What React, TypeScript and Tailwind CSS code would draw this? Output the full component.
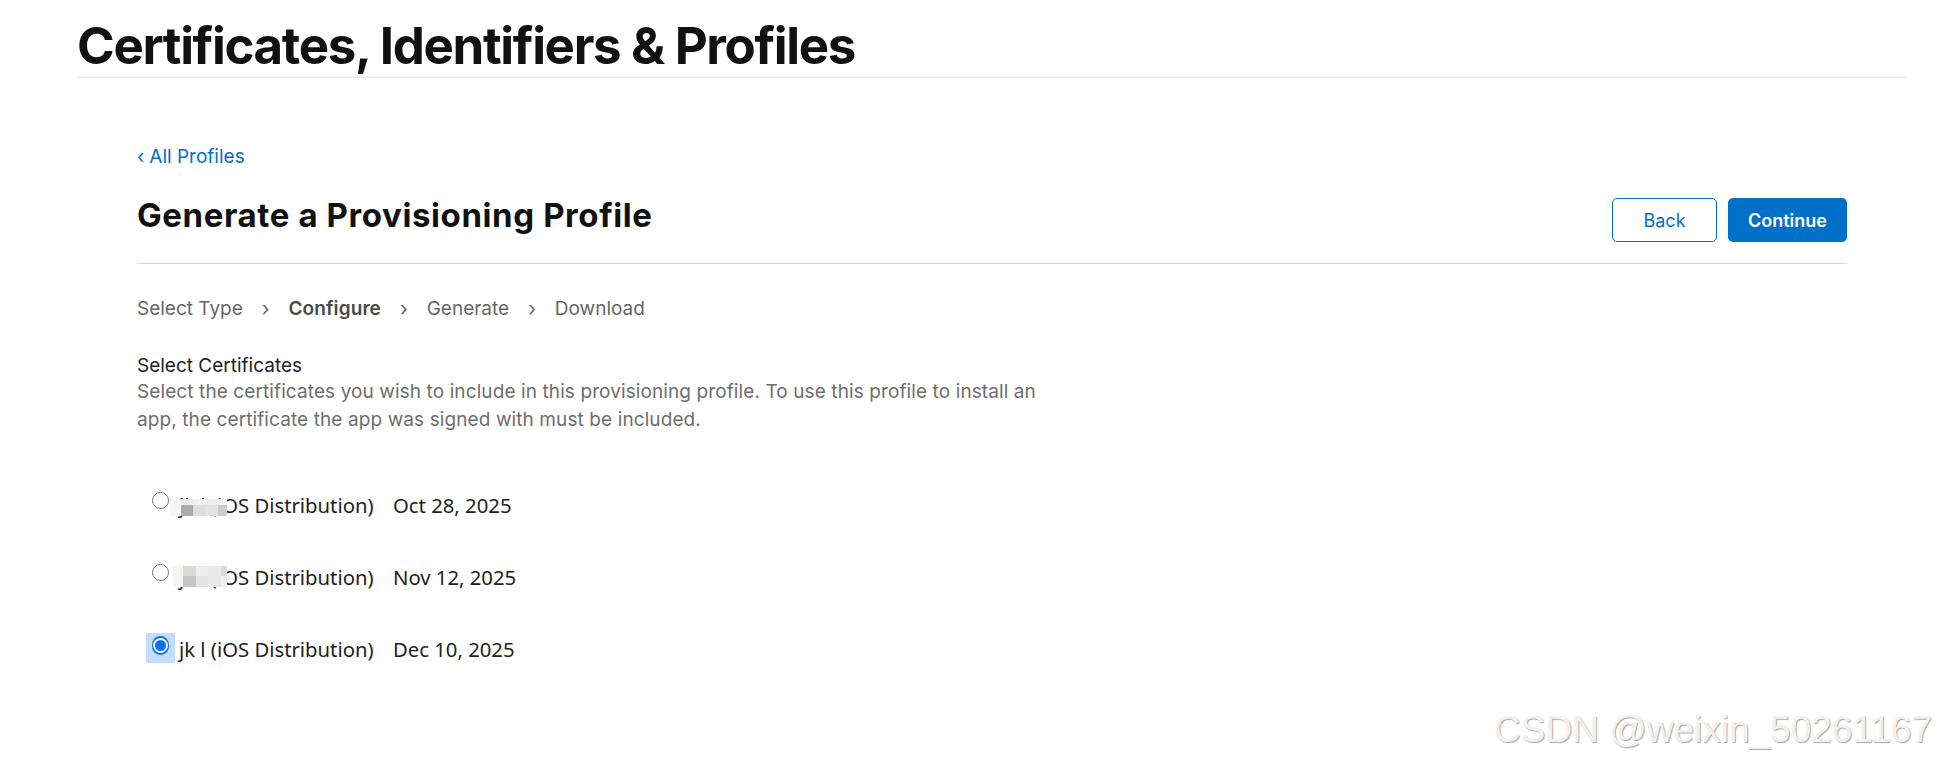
import React from "react";

// Rows of the certificate list; the first two names are pixelated in the picture
const certificates = [
  { name: "jk l", date: "Oct 28, 2025", selected: false, mosaic: 1 },
  { name: "jk l", date: "Nov 12, 2025", selected: false, mosaic: 2 },
  { name: "jk l", date: "Dec 10, 2025", selected: true, mosaic: 0 },
];

function Mosaic({ variant }: { variant: number }) {
  if (variant === 1) {
    return (
      <span className="absolute left-[-9px] top-[7px] flex flex-col">
        <span className="flex h-[6px]">
          <span className="w-[11px] bg-[#f4f4f4]" />
          <span className="w-[12px] bg-[#ececec]" />
          <span className="w-[13px] bg-[#f2f2f2]" />
          <span className="w-[12px] bg-[#eeeeee]" />
          <span className="w-[9px] bg-[#f3f3f3]" />
        </span>
        <span className="flex h-[11px]">
          <span className="w-[11px] bg-[#f6f6f6]" />
          <span className="w-[12px] bg-[#acacac]" />
          <span className="w-[13px] bg-[#dedede]" />
          <span className="w-[12px] bg-[#e3e3e3]" />
          <span className="w-[9px] bg-[#cccccc]" />
        </span>
      </span>
    );
  }
  if (variant === 2) {
    return (
      <span className="absolute left-[-6px] top-[2px] flex flex-col">
        <span className="flex h-[10px]">
          <span className="w-[10px] bg-[#f3f3f3]" />
          <span className="w-[13px] bg-[#d9d9d6]" />
          <span className="w-[12px] bg-[#eeeeee]" />
          <span className="w-[13px] bg-[#e9e9e9]" />
          <span className="w-[6px] bg-[#dadada]" />
        </span>
        <span className="flex h-[11px]">
          <span className="w-[10px] bg-[#f5f5f5]" />
          <span className="w-[13px] bg-[#c6c6c2]" />
          <span className="w-[12px] bg-[#e4e4e4]" />
          <span className="w-[13px] bg-[#e8e8e8]" />
          <span className="w-[6px] bg-[#f0f0f0]" />
        </span>
      </span>
    );
  }
  return null;
}

function Radio({ checked }: { checked: boolean }) {
  if (checked) {
    return (
      <span className="relative mt-[1px] flex h-[17px] w-[17px] shrink-0 items-center justify-center">
        <span className="absolute left-[-6px] top-[-4px] h-[30px] w-[29px] bg-[#c4ddff]" />
        <span className="relative flex h-[19px] w-[19px] items-center justify-center rounded-full bg-[#0a72f0]">
          <span className="flex h-[15px] w-[15px] items-center justify-center rounded-full bg-white">
            <span className="h-[11px] w-[11px] rounded-full bg-[#0a72f0]" />
          </span>
        </span>
      </span>
    );
  }
  return <span className="h-[17px] w-[17px] shrink-0 rounded-full border border-[#767676] bg-white" />;
}

export default function App() {
  return (
    <div className="relative min-h-[760px] overflow-hidden bg-white font-['Inter',sans-serif] text-[#1d1d1f]">
      {/* Cabeçalho da página */}
      <header className="ml-[77px] w-[1830px] border-b border-[#e3e3e3] pb-[5px] pt-[20px]">
        <h1 className="text-[51px] font-bold leading-[52px] tracking-[-1.35px] text-[#111111]">
          Certificates, Identifiers &amp; Profiles
        </h1>
      </header>

      <main className="ml-[137px] w-[1710px]">
        <a href="#" className="mt-[67px] block text-[19px] leading-[24px] text-[#0070c9]">
          <span className="mr-[5px]">‹</span>All Profiles
        </a>

        <div className="flex items-start justify-between border-b border-[#d6d6d6] pb-[21px]">
          <h2 className="mt-[27px] text-[33px] font-bold leading-[38px] tracking-[0.6px] text-[#111111]">
            Generate a Provisioning Profile
          </h2>
          <div className="mt-[29px] flex gap-[11px]">
            <button className="h-[44px] w-[105px] rounded-[5px] border border-[#0070c9] bg-white text-[18px] text-[#0070c9]">
              Back
            </button>
            <button className="h-[44px] w-[119px] rounded-[5px] bg-[#0070c9] text-[18px] font-semibold text-white">
              Continue
            </button>
          </div>
        </div>

        {/* Etapas */}
        <nav className="mt-[33px] flex items-center text-[19px] leading-[24px] text-[#666666]">
          <span>Select Type</span>
          <span className="mx-[19px] text-[20px]">›</span>
          <span className="font-semibold tracking-[0.1px] text-[#4a4a4a]">Configure</span>
          <span className="mx-[19px] text-[20px]">›</span>
          <span>Generate</span>
          <span className="mx-[19px] text-[20px]">›</span>
          <span>Download</span>
        </nav>

        <section className="mt-[33px]">
          <h3 className="text-[19px] leading-[24px] text-[#222222]">Select Certificates</h3>
          <p className="w-[910px] text-[19px] leading-[28px] tracking-[0.1px] text-[#6e6e6e]">
            Select the certificates you wish to include in this provisioning profile. To use this profile to install an
            app, the certificate the app was signed with must be included.
          </p>
        </section>

        <div className="mt-[58px] flex flex-col">
          {certificates.map((c) => (
            <label
              key={c.date}
              className="flex h-[72px] items-start pl-[15px] font-['Noto_Sans',sans-serif] text-[20.3px] leading-[26px] text-[#222222]"
            >
              <span className="flex">
                <Radio checked={c.selected} />
              </span>
              <span className="relative ml-[10px] w-[214px] shrink-0">
                {c.name} (iOS Distribution)
                <Mosaic variant={c.mosaic} />
              </span>
              <span>{c.date}</span>
            </label>
          ))}
        </div>
      </main>

      <div className="absolute right-[6px] top-[711px] whitespace-nowrap font-['Liberation_Sans',Arial,sans-serif] text-[37px] leading-none text-[#f1f1f1] [text-shadow:1px_1px_1px_rgba(0,0,0,0.35)]">
        CSDN @weixin_50261167
      </div>
    </div>
  );
}
